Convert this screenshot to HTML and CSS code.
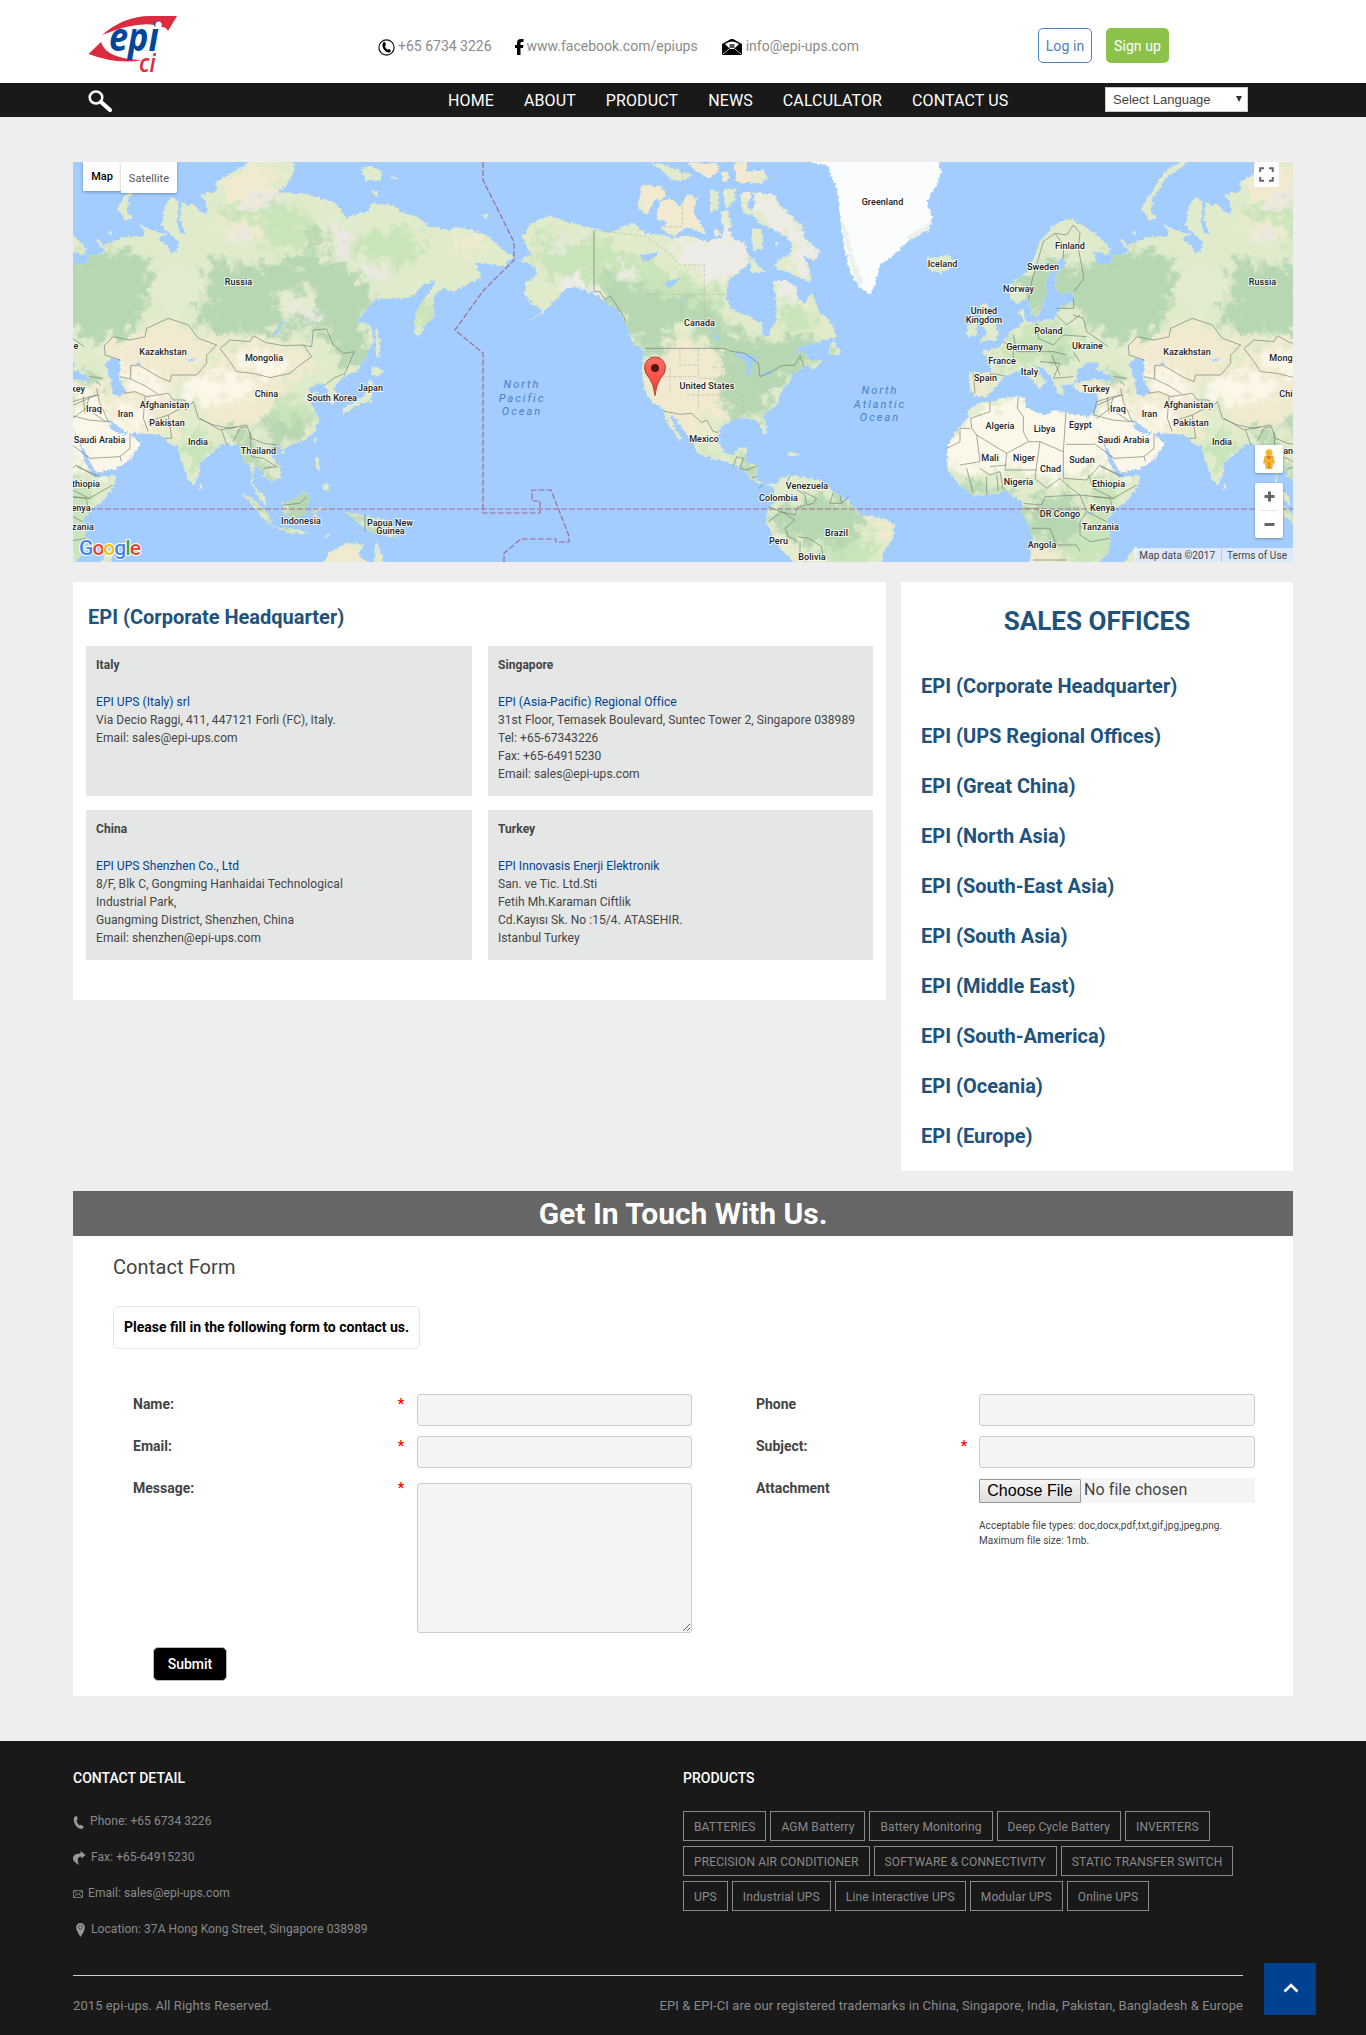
FILE: index.html
```html
<!DOCTYPE html>
<html lang="en">
<head>
<meta charset="utf-8">
<title>Contact Us - EPI UPS</title>
<link rel="stylesheet" href="styles.css">
</head>
<body>
<header class="top">
  <svg class="logo" width="92" height="62" viewBox="0 0 92 62">
    <path fill="#dc2a3f" d="M14 20Q36 1 62 1H89L80 16Q78 12 74 12Q54 4 14 20Z"/>
    <path fill="#dc2a3f" d="M.5 39L13 27Q18 44 54 45Q30 50 .5 39Z"/>
    <text class="logo-epi" transform="translate(21 36) scale(.88 1)">epi</text>
    <ellipse cx="70.500" cy="10" rx="3.200" ry="3.600" fill="#fff"/>
    <text class="logo-ci" transform="translate(51 56.500) scale(.86 1)">ci</text>
  </svg>
  <div class="contacts">
    <span class="contact"><svg width="17" height="17" viewBox="0 0 17 17"><circle cx="8.500" cy="8.500" r="7.600" fill="none" stroke="#111" stroke-width="1.200"/><path fill="#000" d="M5 3.500L7 3L8 6L6.800 7Q7.500 9.500 9.500 10.800L11 9.800L13 12L11.500 13.500Q8.500 14 6 10.800Q3.500 7 5 3.500Z"/></svg>+65 6734 3226</span>
    <span class="contact fb"><svg width="9" height="16" viewBox="0 0 9 16"><path d="M2 16V9H0V6H2V4Q2 0 6 0H8.500V3H6.700Q5.500 3 5.500 4.200V6H8.500L8 9H5.500V16Z"/></svg>www.facebook.com/epiups</span>
    <span class="contact mail"><svg width="20" height="16" viewBox="0 0 20 16"><path d="M0 5L9 0H11L20 5V15Q20 16 19 16H1Q0 16 0 15Z"/><path fill="#fff" d="M3 5Q10 0 17 5L12 10H8Z"/><rect x="7.500" y="5" width="5" height="4" fill="#555"/><path stroke="#fff" stroke-width=".7" fill="none" d="M1 15L7 10M19 15L13 10"/></svg>info@epi-ups.com</span>
  </div>
  <div class="account"><a class="login">Log in</a><a class="signup">Sign up</a></div>
</header>
<nav class="nav">
  <svg class="search" width="25" height="23" viewBox="0 0 25 23"><ellipse cx="8" cy="7.500" rx="6.300" ry="6" fill="none" stroke="#fff" stroke-width="2.500"/><path d="M13 12L22 20" stroke="#fff" stroke-width="4.200" stroke-linecap="round"/></svg>
  <div class="menu"><a>HOME</a><a>ABOUT</a><a>PRODUCT</a><a>NEWS</a><a>CALCULATOR</a><a>CONTACT US</a></div>
  <div class="lang"><span>Select Language</span><i></i></div>
</nav>
<main class="page">
  <section class="map">
    <svg class="world" width="1220" height="400" viewBox="0 0 1220 400">
      <defs>
        <filter id="rough" filterUnits="userSpaceOnUse" x="-700" y="0" width="2900" height="1260">
          <feTurbulence type="fractalNoise" baseFrequency=".1" numOctaves="4" seed="4" result="n"/>
          <feDisplacementMap in="SourceGraphic" in2="n" scale="16" xChannelSelector="R" yChannelSelector="G"/>
        </filter>
        <filter id="soft" filterUnits="userSpaceOnUse" x="-700" y="-50" width="2900" height="1350">
          <feGaussianBlur stdDeviation="9" result="b"/>
          <feTurbulence type="fractalNoise" baseFrequency=".03" numOctaves="5" seed="9" result="n"/>
          <feDisplacementMap in="b" in2="n" scale="110" xChannelSelector="R" yChannelSelector="G"/>
        </filter>
        <path id="asia" d="M8 325L45 330 60 300 85 300 103 285 80 262 85 248 98 270 125 262 160 245 215 245 225 235 205 207 245 225 292 240 265 250 290 270 302 295 320 290 325 262 313 250 275 210 285 150 305 125 325 140 320 200 330 238 343 233 330 190 335 140 350 150 375 150 395 175 410 180 410 150 393 120 440 108 440 80 500 45 545 14 670 14 674 50 650 90 620 112 700 115 750 130 790 140 810 160 830 192 850 180 890 170 905 145 970 150 990 170 1050 190 1075 215 1140 225 1160 215 1220 230 1250 240 1290 275 1328 305 1300 335 1250 325 1215 325 1235 370 1200 385 1150 410 1120 400 1095 420 1090 450 1095 480 1065 510 1045 548 1035 530 1035 480 1055 440 1080 410 1100 375 1060 390 1030 420 1005 430 960 430 915 435 880 475 858 500 903 512 912 560 890 600 860 650 830 660 805 680 790 700 800 720 795 745 780 745 775 710 760 685 735 690 715 700 725 715 745 710 725 735 725 750 745 790 735 830 705 855 660 870 635 888 620 870 600 880 610 910 635 940 630 970 600 980 580 960 565 935 552 940 548 985 560 1005 585 1025 590 1052 565 1030 545 985 540 930 520 920 505 870 490 870 470 865 450 870 440 885 410 905 390 925 385 960 370 992 350 960 330 900 325 870 300 870 285 850 270 838 200 835 165 830 130 800 115 795 125 825 160 840 178 832 190 850 212 865 185 910 150 935 80 955 70 940 50 900 20 840 -3 790 13 735 60 690 62 665 33 625 20 500Z"/>
        <path id="europe" transform="translate(-642)" d="M570 190L640 230 695 280 680 300 640 288 650 325 690 335 720 400 740 600 760 700 740 780 655 800 642 780 655 735 650 715 600 712 573 690 600 680 640 672 700 680 698 665 665 650 645 645 660 625 620 620 590 650 592 672 572 690 545 690 552 722 530 712 515 670 490 640 468 632 475 650 500 685 488 690 480 706 460 680 430 645 400 655 370 665 345 700 320 725 285 722 270 710 268 652 335 655 330 625 305 590 360 575 390 530 432 500 415 470 430 460 438 500 470 500 520 495 540 455 582 440 580 412 540 415 525 400 528 360 560 325 545 310 522 330 495 385 502 420 475 482 455 480 445 430 410 445 390 430 390 390 450 340 480 260 520 210Z"/>
        <path id="africa" transform="translate(-642)" d="M640 775L640 790 662 850 690 925 712 965 780 962 772 1000 737 1040 702 1065 682 1100 692 1150 687 1190 640 1240 445 1240 458 1160 445 1110 425 1070 430 1040 400 1025 380 1005 340 1018 280 1022 240 990 205 950 200 920 205 870 235 820 265 790 265 765 300 742 330 740 390 725 432 725 435 755 490 782 525 765 560 775 620 785Z"/>
        <path id="islands" d="M172 115Q150 135 145 165L165 195 187 193 172 165 178 130 215 70 280 22 270 15 210 50ZM875 40L900 32 940 50 930 75 885 78ZM955 60L985 70 980 78ZM903 105L925 110 920 125ZM1230 182L1255 175 1250 190ZM115 235L125 230 128 242ZM918 515L930 560 930 600 918 608 915 560ZM912 630L942 648 922 665 902 662ZM905 672L912 700 902 740 862 750 820 778 817 762 860 738 888 718 897 680ZM735 842L742 850 733 868ZM630 890L645 885 642 900ZM735 905L747 912 745 935 758 955 738 940ZM760 985L780 990 772 1010 755 1003ZM515 1015L550 1030 598 1080 605 1112 575 1085ZM635 1045L680 1030 705 1005 718 1030 705 1080 660 1092 640 1075ZM605 1115L680 1122 725 1135 660 1135ZM728 1060L770 1058 735 1070 755 1105 740 1085 730 1110ZM760 1145L785 1132 770 1148ZM825 1070L880 1080 950 1095 987 1150 950 1142 900 1130 865 1105ZM745 1240L780 1192 830 1165 882 1168 865 1200 905 1230ZM910 1240L920 1155 948 1240ZM385 985L400 1000 390 1010ZM128 1170L78 1240 125 1240ZM-502 305L-477 310 -437 297 -410 325 -462 355 -492 345ZM-342 450L-320 445 -317 480 -287 530 -292 555 -342 560 -322 530 -342 500ZM-380 510L-352 505 -350 540 -382 546ZM-208 500L-198 495-200 510Z"/>
        <clipPath id="oldclip"><use href="#asia"/><use href="#europe"/><use href="#africa"/><use href="#islands"/></clipPath>
        <g id="oldworld">
          <g filter="url(#rough)"><g clip-path="url(#oldclip)">
            <rect x="-700" width="2100" height="1250" fill="#e0ebcc"/>
            <g filter="url(#soft)">
              <path fill="#b7d7b3" d="M-60 340L30 310 90 290 220 300 250 350 230 440 190 530 40 560-40 480-90 410ZM430 300L500 330 640 320 760 300 840 340 900 390 880 500 900 620 830 640 790 560 730 520 600 540 420 540 380 470ZM720 200L760 220 750 300 700 300ZM570 790L650 750 720 780 720 850 620 870ZM480 820L540 820 560 920 620 930 610 980 550 970 500 860ZM630 1000L740 1000 740 1120 630 1120ZM510 1000L610 1090 600 1120ZM830 1070L990 1120 990 1160 900 1140ZM-220 1050L-130 1020-40 1030-60 1180-190 1150ZM-410 970L-300 1000-220 1000-250 1030-380 1030ZM-230 380L-140 310-80 320-60 420-180 480ZM-180 560L-100 560-60 620-130 630ZM30 640L90 660 100 690 40 680Z"/>
              <path fill="#c9e4ba" d="M450 160L560 120 700 170 730 260 620 290 500 240ZM850 240L1000 220 1080 280 990 330 860 300ZM-300 600L-160 500-50 520-50 570-220 640ZM330 840L430 830 400 940 360 960ZM1040 430L1100 420 1080 500 1040 540ZM0 960L80 1000 60 1210-100 1230-20 1100ZM620 700L720 750 720 800 600 790Z"/>
              <path fill="#e3ecd0" d="M260 330L400 360 420 440 300 470 250 420ZM620 420L740 400 720 470 640 500Z"/>
              <path fill="#f1ead0" d="M100 560L200 540 300 500 440 560 430 610 300 690 160 660 110 620ZM440 580L540 560 700 580 740 640 660 680 480 640ZM340 660L500 620 660 680 580 780 480 820 390 790ZM90 690L300 710 340 780 290 850 150 850ZM440 80L540 30 640 60 560 160 470 130ZM450 200L560 200 600 260 470 250ZM-380 655L-290 650-310 720-370 720ZM-70 680L100 690 80 720-60 720ZM500 800L550 820 520 830ZM740 1240L790 1170 910 1180 930 1240ZM-200 1180L-90 1190-90 1240-200 1240ZM1150 240L1240 250 1230 300 1160 290ZM45 700L100 700 100 790 40 760Z"/>
              <path fill="#fbf7e9" d="M-460 890L-370 770-210 710 0 770 60 690 130 790 240 860 180 950 70 970 30 910-40 970-240 950-450 940ZM150 620L270 680 310 720 200 720 150 680ZM340 680L500 660 560 690 520 730 400 750 350 730ZM480 600L600 590 660 640 600 670 510 630ZM130 740L240 760 230 820 190 820Z"/>
              <path fill="#ebe8e2" d="M500 150L600 110 620 140 540 170ZM460 230L550 220 530 260ZM780 180L830 220 850 310 790 290ZM860 310L940 350 970 390 890 370ZM670 450L750 470 730 500 670 490Z"/>
            </g>
            <path fill="#a3ccff" d="M105 625L125 610 150 612 152 640 145 665 165 710 150 725 128 715 120 665ZM600 545L632 510 638 488 640 505 622 532ZM203 620L212 628 205 637ZM355 615L380 610 365 620ZM-15 1075L-5 1060 0 1080Z"/>
          </g></g>
          <g class="border">
            <path d="M105 570L130 545 180 555 225 545 230 520 295 490 355 510 385 550 440 570 410 600 410 625 380 660 305 660 300 680 275 670 240 650 205 630 182 632 182 672 150 665M160 715L195 710 230 725 295 715 310 735 345 735 350 765M150 615L105 600 103 570M182 672L230 695 265 718M225 725L220 790 235 830M235 800L295 780 350 750M450 580L480 555 540 560 550 542 585 562 640 572 700 570 725 605 690 630 660 655 600 668 550 655 500 650 480 620 450 580M700 570L725 575 730 525 770 522 790 570 820 595 853 590 825 655 790 670 765 690M345 765L370 740 385 790 430 810 480 820 530 810 545 850 580 865 620 870M390 790L450 825 500 815M455 825L470 870M490 860L510 820 530 815M540 830L545 905 580 910 620 935M580 940L620 935M80 700L88 740 115 800M0 780L55 795 115 800M40 725L45 775M0 865L60 910 150 905 180 880 180 835M150 905L155 920M10 750L80 720M20 935L90 965M0 1025L60 1030M640 1050L690 1045 710 1025M885 1080L885 1130M295 780L305 850 285 850"/>
            <path transform="translate(-642)" d="M445 435L455 380 490 260 525 235 560 240 580 210 600 235 595 280 612 370 582 410M525 235L550 270 550 310M530 460L582 460 580 430M580 480L610 490 620 530 685 575M530 480L560 510 600 480M550 540L620 545M470 505L475 550 520 570 550 540M400 540L410 590 460 590 520 590 560 600M370 560L400 580 400 610M330 655L372 662M280 655L285 715M580 590L600 620M480 620L540 625 520 670 580 665M515 600L540 660M415 725L412 760 430 785 430 830 445 860 380 895 290 840 275 820 272 790 330 770 330 740M272 820L240 820 240 860 200 880M290 840L300 920 240 930M445 860L480 860 550 890 558 770M480 860L470 930 465 970M380 895L375 945 470 945M558 868L640 868M550 890L550 970 620 975 660 930 720 965M330 935L380 930M300 940L330 960 360 950 370 1005M320 965L320 1018M350 960L355 1010M260 940L280 1015M465 970L500 1000 540 970 560 990 600 1020 690 1030 700 1070M430 1045L485 1050 495 1025 600 1020 620 1070 680 1100M480 1080L475 1060 430 1060M620 1070L600 1100 600 1140 630 1160 690 1150M455 1120L510 1120 530 1170 590 1170 600 1190M460 1215L560 1215M625 960L640 1000 700 1030 770 990M640 780L650 740 700 725 730 720M700 725L690 760 750 800M650 790L690 760M740 670L700 665M735 690L720 680"/>
          </g>
        </g>
        <path id="na" d="M125 245L155 205 210 182 260 200 340 220 385 235 430 215 460 205 500 235 545 240 580 250 620 240 680 260 720 250 740 215 760 250 790 260 802 290 810 320 790 340 745 375 738 430 755 465 800 480 845 505 850 540 865 550 875 520 890 490 888 440 878 380 920 375 950 400 955 430 975 445 995 415 1020 470 1060 510 1070 545 1020 560 960 575 945 595 975 590 985 615 1030 615 1000 645 985 630 940 655 925 685 900 710 895 745 850 780 862 830 850 835 830 795 780 790 745 800 720 820 715 850 730 890 760 900 780 875 802 880 795 920 830 930 830 970 850 990 880 985 890 1000 880 995 830 985 790 945 740 920 690 910 650 890 640 860 600 810 570 770 580 810 608 858 595 850 560 800 548 762 520 745 495 710 485 650 490 600 495 590 455 560 440 510 420 470 375 440 340 415 300 400 265 395 230 430 200 465 140 505 190 465 160 450 135 420 135 380 170 365 165 335 120 315 155 300Z"/>
        <path id="sa" d="M880 1000L900 970 930 960 1020 975 1060 1010 1110 1040 1140 1080 1210 1090 1245 1110 1240 1150 1210 1190 1205 1240 960 1240 900 1180 855 1100 865 1060 885 1040Z"/>
        <path id="arctic" d="M485 90L545 95 560 125 520 140 500 180 475 160ZM540 140L575 130 600 155 625 115 650 130 640 170 680 240 620 215 580 245 545 220 565 200 530 195ZM500 20L560 30 600 50 640 60 600 80 570 70 540 40ZM620 20L680 25 710 20 720 40 690 70 650 50ZM690 105L718 110 715 165 690 170ZM730 100L770 105 765 135 735 165ZM725 170L745 165 755 215 735 220 722 200ZM780 115L810 110 815 125 800 150 820 180 790 175ZM760 20L800 20 800 50 850 45 865 70 840 85 770 80ZM725 50L745 50 745 80 728 80ZM820 110L885 120 900 150 935 185 970 215 970 245 1020 290 1005 318 970 300 990 350 995 385 940 360 880 335 900 310 930 300 935 260 895 230 840 205 810 170 825 150ZM815 220L845 225 850 280 820 290ZM810 305L855 350 815 355ZM1060 550L1070 575 1090 600 1045 598 1050 575ZM830 860L905 885 860 870ZM920 890L960 900 930 905ZM975 903L985 903ZM700 220L725 235 705 250ZM885 260L898 262 890 275Z"/>
        <path id="greenland" d="M950 14L1040 30 1070 100 1080 180 1090 260 1110 350 1140 400 1175 418 1200 330 1240 300 1290 255 1345 225 1358 190 1340 140 1370 90 1385 50 1370 14Z"/>
        <clipPath id="newclip"><use href="#na"/><use href="#sa"/><use href="#arctic"/></clipPath>
      </defs>
      <rect width="1220" height="400" fill="#a3ccff"/>
      <g transform="translate(-3 -7) scale(.33333)"><use href="#oldworld"/></g>
      <g transform="translate(1021 -7) scale(.33333)"><use href="#oldworld"/></g>
      <g transform="translate(407 -7) scale(.33333)">
        <g filter="url(#rough)">
          <g clip-path="url(#newclip)">
            <rect width="1400" height="1250" fill="#e0ebcb"/>
            <g filter="url(#soft)">
              <path fill="#c9e4ba" d="M150 230L340 250 480 300 560 350 640 380 720 410 720 450 500 420 340 400 180 350ZM900 440L1000 470 1000 520 900 520ZM1020 1180L1190 1140 1180 1240 1040 1240ZM700 610L760 620 740 760 690 700ZM640 870L740 900 700 910Z"/>
              <path fill="#b7d7b3" d="M360 350L440 390 560 420 700 450 740 520 860 560 1000 540 1050 590 900 680 850 780 730 790 730 600 600 490 560 530 590 640 490 620 430 500 370 420ZM870 1060L1050 1020 1170 1090 1100 1180 960 1160 870 1120ZM750 890L820 910 840 990 780 940Z"/>
              <path fill="#f1ead0" d="M540 590L600 540 720 600 730 790 640 780 720 840 660 880 550 770 500 690ZM480 80L600 100 700 200 640 250 500 220ZM600 14L900 14 800 100 680 110ZM850 1090L900 1150 960 1230 900 1230ZM1150 1090L1250 1110 1210 1160Z"/>
              <path fill="#eeece6" d="M570 270L640 250 720 230 820 280 800 350 730 390 700 370 640 340ZM720 180L770 200 760 250 730 240ZM880 380L960 390 960 450 900 430ZM800 110L900 130 1020 290 980 370 930 340 960 270 840 200ZM230 360L330 370 350 420 240 410ZM400 320L460 340 480 400 420 360ZM460 530L500 550 480 560ZM200 270L330 230 340 240 220 290Z"/>
            </g>
            <path fill="#a3ccff" d="M480 300L540 290 520 310 490 320ZM550 385L600 370 570 400ZM600 435L625 428 610 440ZM695 515L720 560 705 550ZM765 590L820 600 840 630 820 620 810 660 800 665 800 620 770 600ZM840 660L880 645 860 665Z"/>
          </g>
          <use href="#greenland" fill="#fafcfd"/>
          <path fill="#eef0ec" d="M1080 180L1095 260 1115 340 1140 400 1150 380 1120 310 1105 240ZM1290 255L1345 225 1358 190 1340 210 1280 245Z"/>
        </g>
        <g class="border">
          <path d="M342 225V410L360 410 375 435 390 422 432 485 435 500M495 580H733L750 588 795 595 835 625 840 665 875 650 905 632 945 630 960 602 972 635M550 768L600 778 635 775 665 803 680 795 700 830 715 832M760 935L770 905 790 910 780 940 800 945 833 932M815 968L830 965M930 962L920 985 960 1010 975 1020 980 1050 1000 1045 1010 1030 970 1010M1060 1012L1050 1045 1085 1045 1105 1025M865 1055L900 1070 945 1080 950 1060 975 1050M865 1100L905 1070 945 1095 915 1120 925 1145 955 1160M955 1145L985 1150 1025 1175 1030 1215M960 1160L960 1200 980 1221M835 1000L850 990M1085 1045L1080 1020"/>
        </g>
        <path class="state" d="M607 20V215H545M342 225L500 245 560 290 600 330H673V500M500 418H740M604 418V500M600 580V630H655M655 580V670H730M550 665H655M570 640V720M620 720H730M655 690V770M725 600V690M760 650V700M790 720V780M850 700L900 690"/>
      </g>
      <g class="dateline">
        <path d="M0 347H1220"/>
        <path d="M410 0V18L441 80V98L410 129L382 168L410 191V351H467V339H459V328H478L496 374V380H483V377H448L431 391V400"/>
      </g>
      <g class="labels">
        <text x="165.500" y="123">Russia</text><text x="90" y="193">Kazakhstan</text><text x="191" y="199">Mongolia</text><text x="193.500" y="235">China</text><text x="297.500" y="229">Japan</text><text x="259" y="239">South Korea</text><text x="91.500" y="246">Afghanistan</text><text x="21" y="250">Iraq</text><text x="52.500" y="255">Iran</text><text x="94" y="264">Pakistan</text><text x="26.500" y="281">Saudi Arabia</text><text x="125" y="283">India</text><text x="185.500" y="292">Thailand</text><text x="3" y="187">e</text><text x="5" y="230">key</text><text x="13" y="325">thiopia</text><text x="8" y="349">enya</text><text x="10" y="368">zania</text><text x="228" y="362">Indonesia</text><text x="317" y="364">Papua New</text><text x="317.500" y="372">Guinea</text>
        <text x="626.500" y="164">Canada</text><text x="634" y="227">United States</text><text x="631" y="280">Mexico</text><text x="734" y="327">Venezuela</text><text x="705.500" y="339">Colombia</text><text x="763.500" y="374">Brazil</text><text x="705.500" y="382">Peru</text><text x="739" y="398">Bolivia</text><text x="809.500" y="43">Greenland</text>
        <text x="869.500" y="105">Iceland</text><text x="997" y="87">Finland</text><text x="970" y="108">Sweden</text><text x="945.500" y="130">Norway</text><text x="911" y="152">United</text><text x="911" y="161">Kingdom</text><text x="975.500" y="172">Poland</text><text x="951.500" y="188">Germany</text><text x="1014.500" y="187">Ukraine</text><text x="929" y="202">France</text><text x="956.500" y="213">Italy</text><text x="912.500" y="219">Spain</text><text x="1023" y="230">Turkey</text><text x="927" y="267">Algeria</text><text x="971.500" y="270">Libya</text><text x="1007.500" y="266">Egypt</text><text x="917" y="299">Mali</text><text x="951" y="299">Niger</text><text x="977.500" y="310">Chad</text><text x="1009" y="301">Sudan</text><text x="945.500" y="323">Nigeria</text><text x="1035.500" y="325">Ethiopia</text><text x="1029.500" y="349">Kenya</text><text x="987" y="355">DR Congo</text><text x="1027.500" y="368">Tanzania</text><text x="969" y="386">Angola</text>
        <text x="1189.500" y="123">Russia</text><text x="1114" y="193">Kazakhstan</text><text x="1208" y="199">Mong</text><text x="1213" y="235">Chi</text><text x="1115.500" y="246">Afghanistan</text><text x="1045" y="250">Iraq</text><text x="1076.500" y="255">Iran</text><text x="1118" y="264">Pakistan</text><text x="1050.500" y="281">Saudi Arabia</text><text x="1149" y="283">India</text><text x="1214" y="292">lan</text>
      </g>
      <g class="ocean"><text x="449" y="226">North</text><text x="449" y="240">Pacific</text><text x="449" y="253">Ocean</text><text x="807" y="232">North</text><text x="807" y="246">Atlantic</text><text x="807" y="259">Ocean</text></g>
      <g transform="translate(582 234)"><defs><linearGradient id="pin" x2="0" y2="1"><stop stop-color="#fb7064"/><stop offset="1" stop-color="#ef3a30"/></linearGradient></defs><path fill="url(#pin)" stroke="#b1332c" stroke-width=".9" d="M0-.5Q-1-11-5.500-17.500Q-10.500-23-10.500-28.500A10.500 10.500 0 0 1 10.500-28.500Q10.500-23 5.500-17.500Q1-11 0-.5Z"/><circle cy="-28" r="4" fill="#5a130d"/></g>
      <text class="google" x="6" y="393" textLength="62"><tspan fill="#4285f4">G</tspan><tspan fill="#ea4335">o</tspan><tspan fill="#fbbc05">o</tspan><tspan fill="#4285f4">g</tspan><tspan fill="#34a853">l</tspan><tspan fill="#ea4335">e</tspan></text>
    </svg>
    <div class="maptype"><b>Map</b><span>Satellite</span></div>
    <div class="full"><svg width="15" height="15" viewBox="0 0 15 15"><path d="M1.200 5V1.200H5M10 1.200H13.800V5M13.800 10V13.800H10M5 13.800H1.200V10" fill="none" stroke="#666" stroke-width="2"/></svg></div>
    <div class="pegman"><svg width="12" height="20" viewBox="0 0 12 20"><path fill="#fbb52a" stroke="#d08a1c" stroke-width=".5" d="M2 7H10L11.500 14H9.500L9 19.500H3L2.500 14H.5Z"/><circle cx="6" cy="3.800" r="3.500" fill="#fbb52a"/><path fill="#e8572a" d="M3.500 7.500H8.500L6 10.500Z"/><path stroke="#b9791b" d="M6 13V19.500"/></svg></div>
    <div class="zoom"><svg width="28" height="55" viewBox="0 0 28 55"><path d="M9.500 13.500H19.500M14.500 8.500V18.500M9.500 41.500H19.500" stroke="#666" stroke-width="3"/><path d="M4 27.500H23" stroke="#e6e6e6"/></svg></div>
    <div class="credit"><span>Map data ©2017</span><span>Terms of Use</span></div>
  </section>
  <div class="columns">
    <section class="hq">
      <h2>EPI (Corporate Headquarter)</h2>
      <div class="offices">
        <article><h3>Italy</h3><a>EPI UPS (Italy) srl</a><p>Via Decio Raggi, 411, 447121 Forli (FC), Italy.<br>Email: sales@epi-ups.com</p></article>
        <article><h3>Singapore</h3><a>EPI (Asia-Pacific) Regional Office</a><p>31st Floor, Temasek Boulevard, Suntec Tower 2, Singapore 038989<br>Tel: +65-67343226<br>Fax: +65-64915230<br>Email: sales@epi-ups.com</p></article>
        <article><h3>China</h3><a>EPI UPS Shenzhen Co., Ltd</a><p>8/F, Blk C, Gongming Hanhaidai Technological<br>Industrial Park,<br>Guangming District, Shenzhen, China<br>Email: shenzhen@epi-ups.com</p></article>
        <article><h3>Turkey</h3><a>EPI Innovasis Enerji Elektronik</a><p>San. ve Tic. Ltd.Sti<br>Fetih Mh.Karaman Ciftlik<br>Cd.Kayısı Sk. No :15/4. ATASEHIR.<br>Istanbul Turkey</p></article>
      </div>
    </section>
    <aside class="sales">
      <h2>SALES OFFICES</h2>
      <ul><li>EPI (Corporate Headquarter)</li><li>EPI (UPS Regional Offices)</li><li>EPI (Great China)</li><li>EPI (North Asia)</li><li>EPI (South-East Asia)</li><li>EPI (South Asia)</li><li>EPI (Middle East)</li><li>EPI (South-America)</li><li>EPI (Oceania)</li><li>EPI (Europe)</li></ul>
    </aside>
  </div>
  <section class="touch">
    <h2>Get In Touch With Us.</h2>
    <form class="form">
      <h3>Contact Form</h3>
      <p class="hint">Please fill in the following form to contact us.</p>
      <div class="fields">
        <label>Name:<em>*</em></label><input type="text"><label class="right">Phone</label><input type="text">
        <label>Email:<em>*</em></label><input type="text"><label class="right">Subject:<em>*</em></label><input type="text">
        <label>Message:<em>*</em></label><textarea></textarea><label class="right">Attachment</label>
        <div class="attach"><div class="file"><span class="choose">Choose File</span><span class="chosen">No file chosen</span></div><small>Acceptable file types: doc,docx,pdf,txt,gif,jpg,jpeg,png.<br>Maximum file size: 1mb.</small></div>
      </div>
      <button class="submit" type="button">Submit</button>
    </form>
  </section>
</main>
<footer class="footer">
  <div class="fcols">
    <div class="fcol">
      <h4>CONTACT DETAIL</h4>
      <p><svg width="11" height="13" viewBox="0 0 11 13"><path fill="#999" d="M1 1L4 0L4.800 3.500L3.300 4.500Q4 7.500 6.500 9.500L8 8.800L11 11L9 13Q5 13 2 8.500Q0 4.500 1 1Z"/></svg><span class="t1">Phone: +65 6734 3226</span></p>
      <p><svg width="13" height="14" viewBox="0 0 13 14"><path fill="#999" d="M7.500 0L12.500 4L8.500 7.500V5.500Q2.500 6 6 14Q-1 10 0 6.500Q1 2.500 7.500 2.500Z"/></svg><span class="t2">Fax: +65-64915230</span></p>
      <p><svg width="10" height="8" viewBox="0 0 10 8"><path fill="none" stroke="#888" stroke-width=".8" d="M.5.5H9.500V7.500H.5ZM1 1L5 4.500L9 1M1 7L4 4M9 7L6 4"/></svg><span class="t3">Email: sales@epi-ups.com</span></p>
      <p><svg class="loc" width="9" height="14" viewBox="0 0 9 14"><path fill="#999" d="M4.500 14Q0 7 .2 4.200A4.300 4.200 0 0 1 8.800 4.200Q9 7 4.500 14Z"/><circle cx="4.500" cy="4.200" r="2" fill="none" stroke="#333" stroke-width=".8"/></svg><span class="t4">Location: 37A Hong Kong Street, Singapore 038989</span></p>
    </div>
    <div class="fcol">
      <h4>PRODUCTS</h4>
      <div class="tags"><a>BATTERIES</a><a>AGM Batterry</a><a>Battery Monitoring</a><a>Deep Cycle Battery</a><a>INVERTERS</a><a>PRECISION AIR CONDITIONER</a><a>SOFTWARE &amp; CONNECTIVITY</a><a>STATIC TRANSFER SWITCH</a><a>UPS</a><a>Industrial UPS</a><a>Line Interactive UPS</a><a>Modular UPS</a><a>Online UPS</a></div>
    </div>
  </div>
  <div class="legal"><span>2015 epi-ups. All Rights Reserved.</span><span>EPI &amp; EPI-CI are our registered trademarks in China, Singapore, India, Pakistan, Bangladesh &amp; Europe</span></div>
  <a class="totop"><svg width="16" height="10" viewBox="0 0 16 10"><path d="M1.500 8.500L8 2L14.500 8.500" fill="none" stroke="#fff" stroke-width="2.600"/></svg></a>
</footer>
</body>
</html>
```
FILE: styles.css
```css
* { box-sizing: border-box; }
body { margin: 0; background: #eee; font-family: Roboto, sans-serif; font-size: 14px; color: #444; }
h2, h3, h4, p, ul { margin: 0; padding: 0; }
svg { flex: none; }

.top { height: 83px; background: #fff; display: flex; align-items: flex-start; padding-left: 88px; }
.logo { margin-top: 15px; overflow: visible; }
.logo-epi { font: italic bold 39px "Noto Sans", sans-serif; fill: #00479b; }
.logo-ci { font: italic 600 26px "Open Sans", sans-serif; fill: #dc2a3f; }
.contacts { display: flex; margin: 36px 0 0 198px; height: 20px; align-items: center; color: #8b8b8b; width: 660px; }
.contact { display: flex; align-items: center; gap: 3px; line-height: 20px; }
.contact svg { position: relative; top: 1px; }
.fb { margin-left: 23px; }
.mail { margin-left: 24px; gap: 4px; }
.account { display: flex; gap: 14px; margin-top: 28px; }
.account a { height: 35px; line-height: 36px; border-radius: 5px; text-align: center; letter-spacing: .1px; }
.account .login { width: 54px; border: 1px solid #4d82bd; color: #4d82bd; line-height: 34px; }
.account .signup { width: 63px; background: #8bc34a; color: #fff; }

.nav { height: 34px; background: #191919; display: flex; align-items: center; padding-left: 88px; }
.search { margin-top: 3px; }
.menu { display: flex; gap: 30px; margin-left: 335px; width: 657px; color: #fff; font-size: 16px; white-space: nowrap; letter-spacing: .11px; }
.lang { width: 143px; height: 25px; margin-top: -1px; background: #fff; border: 1px solid #ccc; display: flex; justify-content: space-between; align-items: center; padding: 0 5px 0 7px; font: 13px "Liberation Sans", sans-serif; }
.lang i { border: 3px solid transparent; border-top: 6px solid #333; border-bottom: 0; margin-top: -2px; }

.page { width: 1220px; margin: 45px auto 0; }
.map { position: relative; height: 400px; overflow: hidden; }
.world { display: block; }
.border { fill: none; stroke: #6f7a70; stroke-width: 2.400; stroke-opacity: .8; stroke-linejoin: round; }
.state { fill: none; stroke: #b9b9ad; stroke-width: 2; stroke-dasharray: 10 5; }
.dateline { fill: none; stroke: #a05c7c; stroke-width: 1.200; stroke-dasharray: 6 2; stroke-opacity: .85; }
.labels text { font: 500 9px Roboto, sans-serif; letter-spacing: .06px; text-anchor: middle; fill: #222; stroke: #fff; stroke-opacity: .75; stroke-width: 2px; paint-order: stroke; }
.ocean text { font: italic 11px Roboto, sans-serif; letter-spacing: 2px; text-anchor: middle; fill: #4a7fc4; }
.google { font: 500 21px Roboto, sans-serif; stroke: #fff; stroke-width: 2px; paint-order: stroke; }
.maptype { position: absolute; left: 10px; top: 0; display: flex; align-items: flex-start; font-size: 11px; }
.maptype b { width: 38px; height: 29px; line-height: 29px; text-align: center; background: #fff; color: #000; font-weight: 500; box-shadow: 0 1px 3px rgba(0,0,0,.3); }
.maptype span { width: 56px; height: 31px; line-height: 33px; text-align: center; background: #fff; color: #565656; letter-spacing: .1px; border-radius: 0 0 2px 0; box-shadow: 0 1px 3px rgba(0,0,0,.3); }
.full, .pegman, .zoom { position: absolute; background: #fff; border-radius: 2px; display: flex; align-items: center; justify-content: center; }
.full { left: 1181px; top: 0; width: 25px; height: 25px; }
.pegman { left: 1182px; top: 283px; width: 28px; height: 28px; box-shadow: 0 1px 3px rgba(0,0,0,.3); }
.zoom { left: 1182px; top: 321px; width: 28px; height: 55px; box-shadow: 0 1px 3px rgba(0,0,0,.3); }
.credit { position: absolute; right: 0; bottom: 0; height: 14px; display: flex; font-size: 10px; line-height: 15px; letter-spacing: .06px; color: #444; background: rgba(245,245,245,.7); }
.credit span { padding: 0 6px 0 5px; }
.credit span + span { border-left: 1px solid #a3ccff; }

.columns { display: flex; align-items: flex-start; gap: 15px; margin-top: 20px; }
.hq { width: 813px; height: 418px; background: #fff; padding: 20px 13px; }
.hq h2 { font-size: 20px; line-height: 30px; font-weight: 700; color: #20527c; padding-left: 2px; }
.offices { margin-top: 14px; display: grid; grid-template-columns: 386px 385px; column-gap: 16px; row-gap: 14px; }
.offices article { height: 150px; background: #e5e7e6; padding: 10px; font-size: 12px; line-height: 18px; letter-spacing: .06px; white-space: nowrap; }
.offices h3 { font-size: 12px; line-height: 18px; margin-bottom: 19px; font-weight: 700; }
.offices a { color: #00428f; display: block; }
.sales { width: 392px; height: 589px; background: #fff; padding: 19px 20px; }
.sales h2 { font-size: 26px; line-height: 40px; text-align: center; font-weight: 700; color: #20527c; }
.sales ul { list-style: none; margin-top: 20px; }
.sales li { font-size: 20px; line-height: 50px; font-weight: 700; color: #20527c; }

.touch { margin-top: 20px; height: 505px; background: #fff; }
.touch h2 { height: 45px; line-height: 45px; background: #666; color: #fff; text-align: center; font-size: 30px; font-weight: 700; }
.form { padding: 16px 38px 0 40px; display: flex; flex-direction: column; align-items: flex-start; }
.form h3 { font-size: 20px; line-height: 30px; font-weight: 400; letter-spacing: .1px; }
.hint { margin-top: 24px; height: 43px; line-height: 41px; border: 1px solid #e5e5e5; border-radius: 5px; padding: 0 10px; color: #000; font-weight: 700; width: 307px; white-space: nowrap; }
.fields { margin-top: 45px; display: grid; grid-template-columns: 304px 275px 287px 276px; row-gap: 10px; }
.fields label { padding: 0 13px 0 20px; line-height: 20px; font-weight: 700; display: flex; justify-content: space-between; align-self: start; }
.fields .right { padding-left: 64px; padding-right: 12px; }
.fields em { color: #f00; font-style: normal; }
.fields input, .fields textarea { width: 100%; height: 32px; background: #f4f4f4; border: 1px solid #ccc; border-radius: 3px; margin: 0; padding: 0; display: block; }
.fields textarea { height: 150px; margin-top: 5px; }
.file { height: 25px; background: #f4f4f4; display: flex; align-items: center; gap: 3px; font-size: 16px; white-space: nowrap; }
.chosen { line-height: 20px; margin-top: -2px; letter-spacing: .08px; }
.choose { width: 102px; height: 24px; line-height: 22px; margin-top: 1px; border: 1px solid #999; border-radius: 1px; background: linear-gradient(#f6f6f6, #dedede); color: #000; text-align: center; font-family: "Liberation Sans", sans-serif; }
.attach small { display: block; font-size: 10px; line-height: 15px; margin-top: 15px; letter-spacing: .07px; }
.submit { margin: 14px 0 0 40px; width: 74px; height: 34px; padding: 0; background: #000; color: #fff; border: 1px solid #bbb; border-radius: 5px; font: 500 14px Roboto, sans-serif; }

.footer { position: relative; margin-top: 45px; height: 294px; background: #191919; padding: 27px 73px 0; color: #8a8a8a; }
.fcols { display: flex; height: 207px; }
.fcol { width: 610px; }
.footer h4 { color: #fff; font-size: 14px; line-height: 20px; font-weight: 500; margin-bottom: 23px; }
.fcol p { height: 36px; display: flex; align-items: center; font-size: 12px; letter-spacing: .07px; margin-top: 0; }
.fcol p:nth-of-type(1) { margin-top: -8px; }
.t1 { margin-left: 6px; }
.t2, .t3 { margin-left: 5px; }
.loc { margin-left: 3px; }
.t4 { margin-left: 6px; }
.fcol p svg { position: relative; top: 1px; }
.tags { display: flex; flex-wrap: wrap; gap: 5px 4px; width: 570px; }
.tags a { height: 30px; line-height: 30px; padding: 0 10px; border: 1px solid #8a8a8a; font-size: 12px; letter-spacing: .12px; white-space: nowrap; }
.legal { width: 1170px; border-top: 1px solid #ccc; display: flex; justify-content: space-between; font-size: 13px; line-height: 20px; letter-spacing: .085px; padding-top: 20px; }
.totop { position: absolute; left: 1264px; top: 222px; width: 52px; height: 52px; background: #004190; display: flex; align-items: center; justify-content: center; padding: 0 0 2px 2px; }
```
